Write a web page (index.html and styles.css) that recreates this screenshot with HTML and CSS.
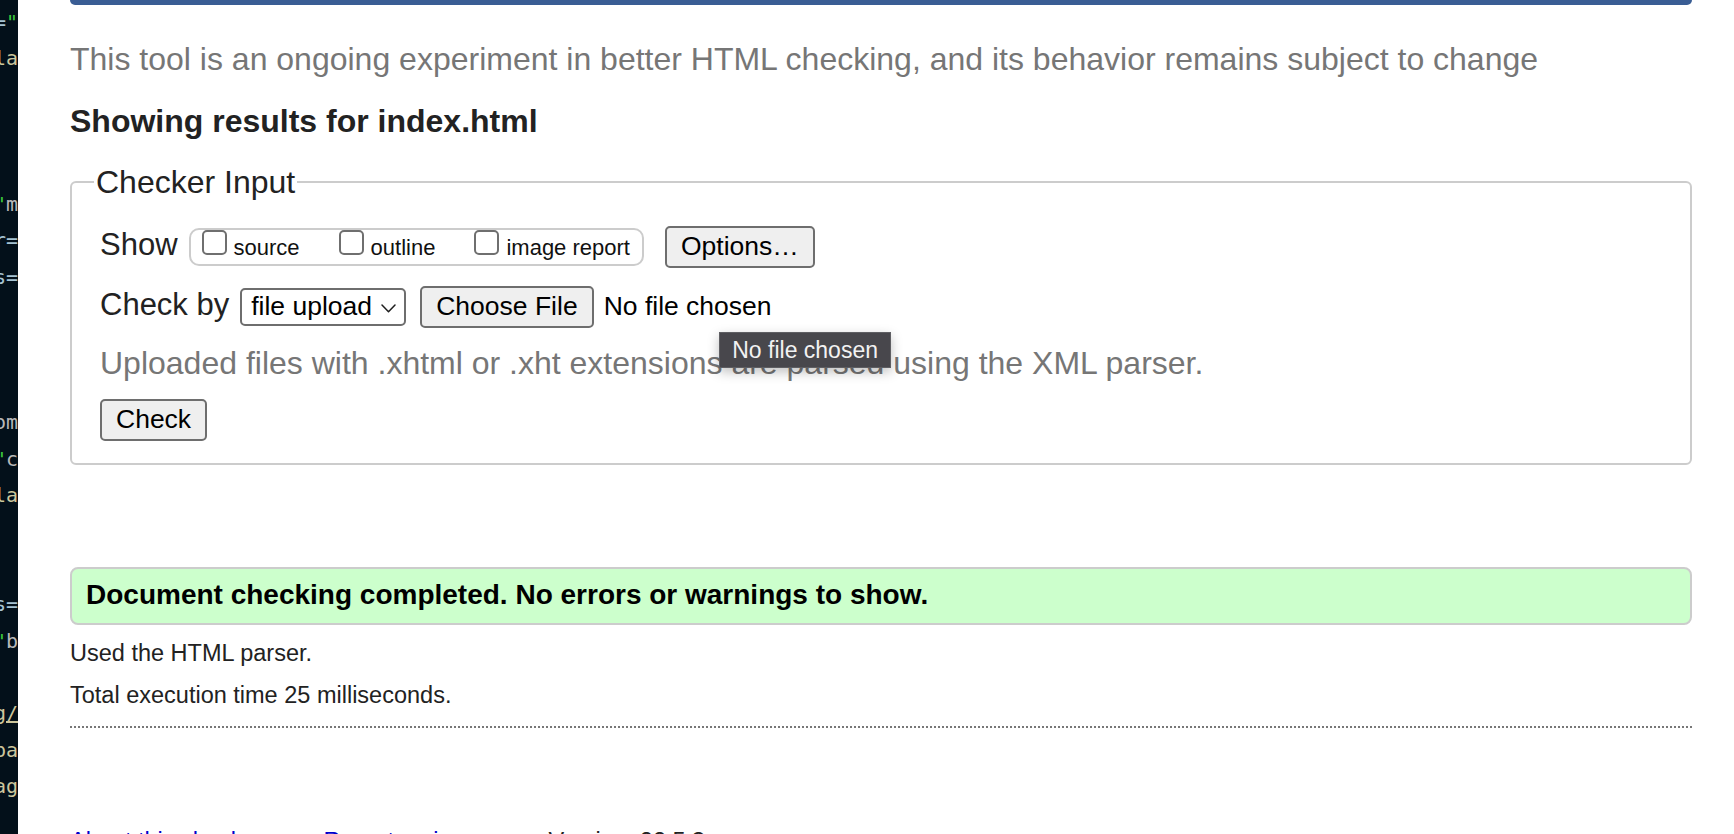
FILE: index.html
```html
<!DOCTYPE html>
<html lang="en">
<head>
<meta charset="utf-8">
<title>Showing results for index.html - Nu Html Checker</title>
<link rel="stylesheet" href="styles.css">
</head>
<body>
<div class="page">
  <aside class="code-strip" aria-hidden="true">
    <div class="ln"><span class="c-attr">class</span><span class="c-eq">=</span><span class="c-str">"</span></div>
    <div class="ln"><span class="c-val">&lt;ula</span></div>
    <div class="ln"></div>
    <div class="ln"></div>
    <div class="ln"></div>
    <div class="ln"><span class="c-str">"</span><span class="c-txt">m</span></div>
    <div class="ln"><span class="c-eq">for=</span></div>
    <div class="ln"><span class="c-val">clas</span><span class="c-eq">s=</span></div>
    <div class="ln"></div>
    <div class="ln"></div>
    <div class="ln"></div>
    <div class="ln"><span class="c-txt">from</span></div>
    <div class="ln"><span class="c-str">"</span><span class="c-txt">c</span></div>
    <div class="ln"><span class="c-val">cla</span></div>
    <div class="ln"></div>
    <div class="ln"></div>
    <div class="ln"><span class="c-val">clas</span><span class="c-eq">s=</span></div>
    <div class="ln"><span class="c-str">"</span><span class="c-txt">b</span></div>
    <div class="ln"></div>
    <div class="ln"><span class="c-link">.org/</span></div>
    <div class="ln"><span class="c-val">pa</span></div>
    <div class="ln"><span class="c-val">ag</span></div>
    <div class="ln"></div>
  </aside>

  <main class="main">
    <div class="topbar"></div>
    <p class="intro">This tool is an ongoing experiment in better HTML checking, and its behavior remains subject to change</p>
    <h2 class="results">Showing results for index.html</h2>

    <form class="checker">
      <fieldset class="input-box">
        <legend class="legend">Checker Input</legend>

        <div class="row">
          <span class="row-label">Show</span>
          <div class="opts">
            <label class="opt"><input type="checkbox"><span>source</span></label>
            <label class="opt"><input type="checkbox"><span>outline</span></label>
            <label class="opt"><input type="checkbox"><span>image report</span></label>
          </div>
          <button type="button" class="btn btn-options">Options…</button>
        </div>

        <div class="row row-by">
          <span class="row-label">Check by</span>
          <span class="select-wrap">
            <select class="select"><option>file upload</option></select>
            <svg class="chev" width="15" height="9" viewBox="0 0 15 9"><path d="M1 1 L7.5 7.8 L14 1" fill="none" stroke="#1e1e1e" stroke-width="1.5" stroke-linecap="round" stroke-linejoin="round"/></svg>
          </span>
          <span class="file">
            <button type="button" class="btn btn-choose">Choose File</button>
            <span class="file-name">No file chosen</span>
            <span class="tooltip">No file chosen</span>
          </span>
        </div>

        <p class="note">Uploaded files with .xhtml or .xht extensions are parsed using the XML parser.</p>
        <button type="button" class="btn btn-check">Check</button>
      </fieldset>
    </form>

    <div class="success">Document checking completed. No errors or warnings to show.</div>
    <p class="meta">Used the HTML parser.</p>
    <p class="meta">Total execution time 25 milliseconds.</p>
    <hr class="sep">
    <p class="footer"><a href="#" class="flink">About this checker</a><span class="dot">•</span><a href="#" class="flink">Report an issue</a><span class="dot">•</span><span>Version: 22.5.3</span></p>
  </main>
</div>
</body>
</html>
```

FILE: styles.css
```css
* { box-sizing: border-box; }

html, body {
  margin: 0;
  height: 100%;
}

body {
  background: #fff;
  color: #222;
  font-family: "Liberation Sans", Arial, Helvetica, sans-serif;
  overflow: hidden;
}

.page {
  display: flex;
  height: 834px;
  overflow: hidden;
}

/* dark editor strip on the far left */
.code-strip {
  flex: 0 0 18px;
  background: #03101a;
  overflow: hidden;
  padding-top: 4px;
  font-family: "DejaVu Sans Mono", "Liberation Mono", monospace;
  font-size: 20px;
}

.ln {
  height: 36.4px;
  line-height: 36.4px;
  display: flex;
  justify-content: flex-end;
  white-space: nowrap;
}

.ln span { flex: none; }
.c-attr { color: #9cc4dc; }
.c-eq { color: #a6c3d3; }
.c-str { color: #3cc83c; }
.c-val { color: #cdc69c; }
.c-txt { color: #b8b8b8; }
.c-link { color: #cdc69c; text-decoration: underline; }

/* main column */
.main {
  flex: 1;
  min-width: 0;
  padding: 0 42px 0 52px;
}

.topbar {
  height: 5px;
  background: #3a5d94;
  border-radius: 0 0 8px 8px;
}

.intro {
  margin: 36px 0 0;
  font-size: 32px;
  line-height: 36px;
  color: #767676;
}

.results {
  margin: 26px 0 0;
  font-size: 32px;
  line-height: 36px;
  font-weight: bold;
  color: #222;
}

.checker { margin: 0; }

.input-box {
  margin: 25px 0 0;
  padding: 26px 26px 22px 28px;
  border: 2px solid #ccc;
  border-radius: 6px;
  min-width: 0;
}

.legend {
  margin-left: -6px;
  padding: 0 2px;
  font-size: 32px;
  line-height: 36px;
  color: #222;
}

.row {
  display: flex;
  align-items: baseline;
}

.row-by { margin-top: 18px; }

.row-label {
  margin-right: 11px;
  font-size: 31px;
  line-height: 32px;
  color: #222;
}

/* checkbox group */
.opts {
  display: flex;
  align-items: flex-start;
  height: 38px;
  padding: 0 12px 0 11px;
  border: 2px solid #ccc;
  border-radius: 10px;
}

.opt {
  display: block;
  font-size: 22px;
  line-height: normal;
  color: #111;
  white-space: nowrap;
}

.opt + .opt { margin-left: 39px; }

.opt input {
  -webkit-appearance: none;
  appearance: none;
  width: 25px;
  height: 25px;
  margin: 0 7px 0 0;
  border: 2px solid #6f6f6f;
  border-radius: 5px;
  background: #fff;
  vertical-align: baseline;
}

/* buttons */
.btn {
  font-family: inherit;
  font-size: 26.5px;
  line-height: normal;
  color: #000;
  background: #efefef;
  border: 2px solid #6e6e6e;
  border-radius: 5px;
  padding: 0 14px 2px;
  height: 42px;
}

.btn-options { margin-left: 21px; }

.btn-check {
  display: block;
  margin-top: 18px;
}

/* select */
.select-wrap {
  position: relative;
  display: inline-flex;
  margin-right: 14px;
}

.select {
  -webkit-appearance: none;
  appearance: none;
  width: 166px;
  height: 38px;
  padding: 0 30px 2px 9px;
  font-family: inherit;
  font-size: 26.5px;
  color: #000;
  background: #fff;
  border: 2px solid #6e6e6e;
  border-radius: 5px;
}

.chev {
  position: absolute;
  right: 10px;
  top: 16px;
  pointer-events: none;
}

/* file input */
.file {
  position: relative;
  display: inline-flex;
  align-items: baseline;
}

.file-name {
  margin-left: 10px;
  font-size: 26.5px;
  color: #000;
}

.tooltip {
  position: absolute;
  left: 299px;
  top: 46px;
  padding: 0 12px;
  font-size: 23px;
  line-height: 34px;
  white-space: nowrap;
  color: #f2f2f2;
  background: #48474c;
  border: 1px solid #5f5f63;
  box-shadow: 0 4px 12px rgba(0, 0, 0, 0.25);
}

.note {
  margin: 17px 0 0;
  font-size: 32px;
  line-height: 36px;
  color: #767676;
}

/* results */
.success {
  margin-top: 102px;
  padding: 10px 14px 12px;
  border: 2px solid #ccc;
  border-radius: 8px;
  background: #ccffcc;
  font-size: 28px;
  line-height: 32px;
  font-weight: bold;
  color: #000;
}

.meta {
  margin: 14px 0 0;
  font-size: 23.5px;
  line-height: 28px;
  color: #222;
}

.sep {
  height: 0;
  margin: 17px 0 0;
  border: 0;
  border-top: 2px dotted #777;
}

.footer {
  margin: 99px 0 0;
  font-size: 23.5px;
  line-height: 28px;
  color: #222;
}

.flink {
  color: #0000cc;
  text-decoration: none;
}

.dot {
  margin: 0 26px;
  color: #222;
}
```
